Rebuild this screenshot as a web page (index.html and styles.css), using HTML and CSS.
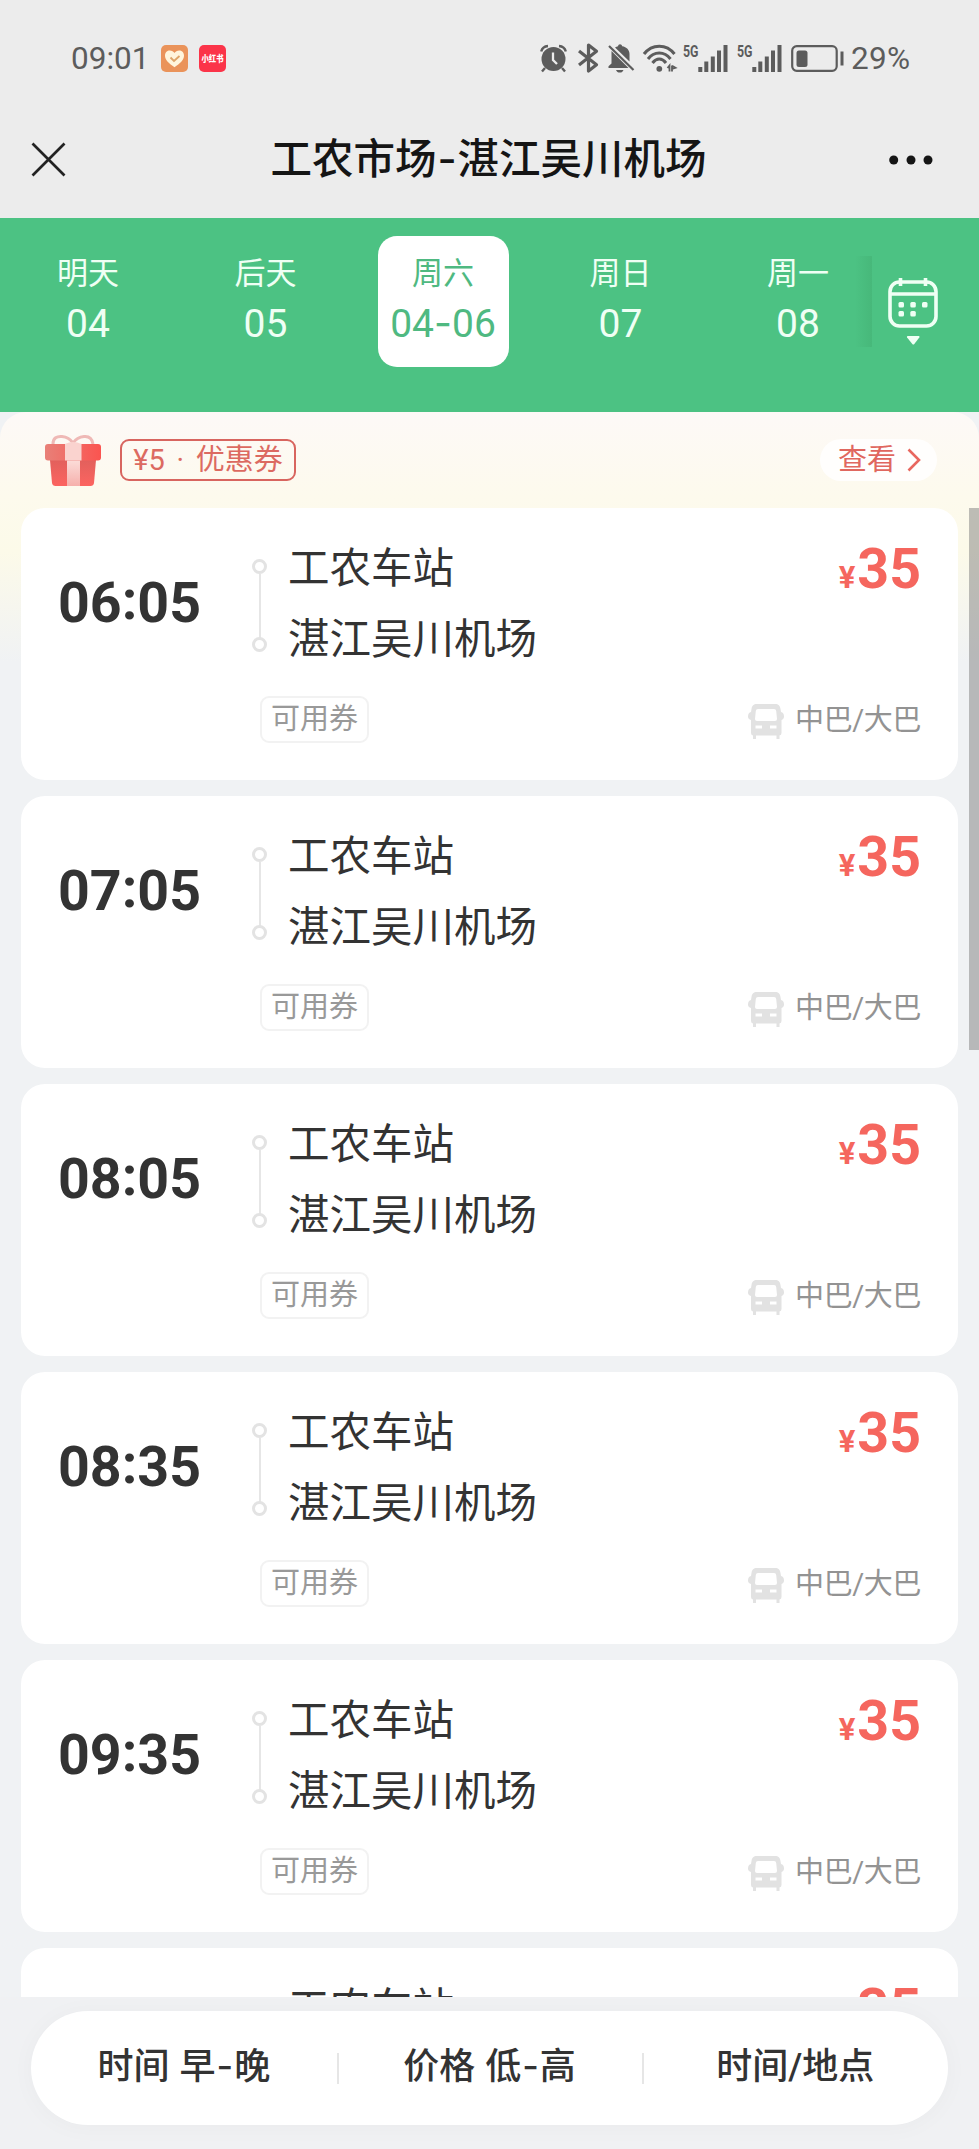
FILE: index.html
```
<!DOCTYPE html>
<html lang="zh-CN">
<head>
    <meta charset="UTF-8">
    <meta name="viewport" content="width=device-width, initial-scale=1.0">
    <title>工农市场-湛江吴川机场</title>
    <link rel="stylesheet" href="styles.css">
</head>
<body>
    <div id="app">
        <div class="status-bar">
            <span class="clock">09:01</span>
            <svg class="app-icon" width="27" height="27" viewBox="0 0 27 27">
                <rect width="27" height="27" rx="5" fill="#ea935a"/>
                <path d="M13.5 22.3C8 18.5 4 15.200 4 10.800C4 7.500 6.300 5.600 8.800 5.600C10.900 5.600 12.500 6.600 13.500 8C14.500 6.600 16.100 5.600 18.200 5.600C20.700 5.600 23 7.500 23 10.800C23 15.200 19 18.500 13.500 22.300Z" fill="#fff5dc"/>
                <path d="M9.500 12.500l3.500 3.500 5.500-5" fill="none" stroke="#dda468" stroke-width="1.800"/>
            </svg>
            <svg class="app-icon" width="27" height="27" viewBox="0 0 27 27">
                <rect width="27" height="27" rx="5" fill="#fb3449"/>
                <text x="2.500" y="16.500" textLength="22" lengthAdjust="spacingAndGlyphs" class="xhs">小红书</text>
            </svg>
            <div class="status-right">
                <svg width="27" height="29" viewBox="0 0 27 29">
                    <circle cx="13.500" cy="15" r="12" fill="#5c5c5c"/>
                    <path d="M1.200 7.500C2 4.300 4.500 2.300 8 2M25.800 7.500C25 4.300 22.500 2.300 19 2M5 24l-3 3.500M22 24l3 3.500" fill="none" stroke="#5c5c5c" stroke-width="2.400"/>
                    <path d="M13 8.500v7.500l4 4" fill="none" stroke="#ececec" stroke-width="2.300"/>
                </svg>
                <svg class="bt" width="21" height="30" viewBox="0 0 21 30">
                    <path d="M1 8l17.500 13.800-8 6.200V2l8 6.200L1 22" fill="none" stroke="#5c5c5c" stroke-width="3.200" stroke-linejoin="round"/>
                </svg>
                <svg class="bell" width="28" height="30" viewBox="0 0 28 30">
                    <path d="M8 4.500C9 3.800 10 3.500 11 3.300C11.200 2 12 1.300 13 1.300S15 2 15.200 3.300C19.500 4 22.500 7 22.500 11V18.500zM4.500 8L21.500 25H1.500V23.300L4.500 20.500z" fill="#5c5c5c"/>
                    <path d="M2 3l24.500 24" stroke="#5c5c5c" stroke-width="2.200"/>
                    <path d="M9 27h7.500c-.6 1.700-1.900 2.600-3.700 2.600s-3.200-.9-3.800-2.600z" fill="#5c5c5c"/>
                </svg>
                <svg class="wifi" width="34" height="29" viewBox="0 0 34 29">
                    <g fill="none" stroke="#5c5c5c" stroke-width="3">
                        <path d="M1 10C9 -.5 23.500 -.5 31.500 10"/>
                        <path d="M5 15C11 7 21.500 7 27.500 15"/>
                        <path d="M9.500 19C13.500 13.700 19 13.700 23 19"/>
                    </g>
                    <circle cx="16.300" cy="24.800" r="2.900" fill="#5c5c5c"/>
                    <path d="M24.500 24l2-2.500v6M29 27.500v-6M29 25l3.500-1.200-3.500-2" fill="none" stroke="#5c5c5c" stroke-width="1.800"/>
                </svg>
                <svg class="signal" width="45" height="29" viewBox="0 0 45 29">
                    <text x="0" y="13" textLength="15.500" lengthAdjust="spacingAndGlyphs">5G</text>
                    <path d="M17.300 28v-5M23.300 28V17.500M29.800 28V12.500M36 28V6.500M42.500 28V1" fill="none" stroke="#5c5c5c" stroke-width="4"/>
                </svg>
                <svg class="signal" width="45" height="29" viewBox="0 0 45 29">
                    <text x="0" y="13" textLength="15.500" lengthAdjust="spacingAndGlyphs">5G</text>
                    <path d="M17.300 28v-5M23.300 28V17.500M29.800 28V12.500M36 28V6.500M42.500 28V1" fill="none" stroke="#5c5c5c" stroke-width="4"/>
                </svg>
                <svg class="battery" width="53" height="29" viewBox="0 0 53 29">
                    <rect x="1.200" y="2.200" width="44.500" height="24.600" rx="4.500" fill="none" stroke="#5c5c5c" stroke-width="2.200"/>
                    <rect x="5.500" y="6.500" width="11" height="16.500" rx="2.500" fill="#5c5c5c"/>
                    <path d="M51 7.500v14" stroke="#5c5c5c" stroke-width="3"/>
                </svg>
                <span class="percent">29%</span>
            </div>
        </div>

        <div class="nav-bar">
            <svg width="35" height="35" viewBox="0 0 35 35">
                <path d="M1.500 1.500l32 32M33.500 1.500l-32 32" stroke="#222" stroke-width="2.700"/>
            </svg>
            <h1>工农市场<span class="dash">-</span>湛江吴川机场</h1>
            <svg class="more" width="44" height="10" viewBox="0 0 44 10">
                <circle cx="4.700" cy="5" r="4.500"/><circle cx="22" cy="5" r="4.500"/><circle cx="39" cy="5" r="4.500"/>
            </svg>
        </div>

        <div class="date-bar">
            <div class="dates">
                <div class="date"><span>明天</span><b>04</b></div>
                <div class="date"><span>后天</span><b>05</b></div>
                <div class="date active"><span>周六</span><b>04<span class="dash">-</span>06</b></div>
                <div class="date"><span>周日</span><b>07</b></div>
                <div class="date"><span>周一</span><b>08</b></div>
            </div>
            <div class="edge"></div>
            <svg class="calendar" width="50" height="70" viewBox="0 0 50 70">
                <g fill="none" stroke="#effff4" stroke-width="3.600">
                    <rect x="2" y="5" width="46" height="44" rx="9.500"/>
                    <path d="M2 17h46M12.500 1v8M37.500 1v8"/>
                </g>
                <g fill="#effff4">
                    <rect x="10.500" y="25" width="5.500" height="5.500" rx="1.500"/>
                    <rect x="22.300" y="25" width="5.500" height="5.500" rx="1.500"/>
                    <rect x="34" y="25" width="5.500" height="5.500" rx="1.500"/>
                    <rect x="10.500" y="34" width="5.500" height="5.500" rx="1.500"/>
                    <rect x="22.300" y="34" width="5.500" height="5.500" rx="1.500"/>
                    <path d="M19.500 59h11.500q1 .5.300 1.500l-5 6.500q-1 1-2 0l-5.200-6.500q-.6-1 .4-1.500z"/>
                </g>
            </svg>
        </div>

        <div class="content">
            <div class="promo">
                <svg class="gift" width="56" height="53" viewBox="0 0 56 53">
                    <defs>
                        <linearGradient id="lid"><stop offset="0" stop-color="#e88078"/><stop offset="1" stop-color="#fb5450"/></linearGradient>
                        <linearGradient id="box" x2="0" y2="1"><stop offset="0" stop-color="#e2605c"/><stop offset="1" stop-color="#fc6460"/></linearGradient>
                        <linearGradient id="band" x2="0" y2="1"><stop offset="0" stop-color="#fbdcd8"/><stop offset="1" stop-color="#f6b0ac"/></linearGradient>
                    </defs>
                    <path d="M8 10C8 4 12 2 17 2.500C22 3 26 6 28 9C30 6 34 3 39 2.500C44 2 47 4 48 10" fill="none" stroke="#efb9b6" stroke-width="3"/>
                    <path d="M5 26h46l-2 23q-.5 3-3.500 3h-35q-3 0-3.500-3z" fill="url(#box)"/>
                    <rect x="0" y="10" width="56" height="16.500" rx="3" fill="url(#lid)"/>
                    <path d="M22 26.500h13V52H22z" fill="url(#band)"/>
                    <path d="M20 10q8-4 16.500 0v16.500H20z" fill="#fad3cf"/>
                </svg>
                <div class="coupon">¥5 · 优惠券</div>
                <div class="view">
                    查看
                    <svg width="14" height="24" viewBox="0 0 14 24">
                        <path d="M1.500 1.500L12 12 1.500 22.500" fill="none" stroke="#e8675f" stroke-width="2.600"/>
                    </svg>
                </div>
            </div>
            <div id="list" class="list"></div>
            <div class="scrollbar"></div>
        </div>

        <div class="footer">
            <div class="sort-bar">
                <div class="sort">时间 早<span class="dash">-</span>晚</div>
                <div class="sort">价格 低<span class="dash">-</span>高</div>
                <div class="sort">时间/地点</div>
            </div>
        </div>
    </div>

    <script>
        const times = ['06:05', '07:05', '08:05', '08:35', '09:35', '10:05'];
        const list = document.getElementById('list');

        // One card for each departure
        times.forEach(time => {
            const [hour, minute] = time.split(':');
            list.innerHTML += `
                <div class="card">
                    <div class="time">${hour}<span class="colon">:</span>${minute}</div>
                    <div class="line"><i></i><i></i></div>
                    <div class="stations">
                        <div>工农车站</div>
                        <div>湛江吴川机场</div>
                    </div>
                    <div class="price"><small>¥</small>35</div>
                    <div class="tag">可用券</div>
                    <div class="bus">
                        <svg width="36" height="37" viewBox="0 0 36 37">
                            <path fill="#e2e2e2" fill-rule="evenodd" d="M9 1h18c3.500 0 5 1.500 5.500 5l.5 3c2 .5 3 2 3 4.500 0 2-1 3-2.500 3.500V30q0 2-2 2.500V36h-3v-3.500H8V36H5v-3.500q-2-.5-2-2.500V17C1 16.500 0 15.500 0 13.500 0 11 1 9.500 3 9l.5-3C4 2.500 5.500 1 9 1zM10 6q-2 0-2.200 2L7 16q0 2 2 2h18q2 0 2-2l-.8-8Q28 6 26 6zM7.500 22.500v3H14v-3zM22 22.500v3h6.500v-3z"/>
                        </svg>
                        <span>中巴/大巴</span>
                    </div>
                </div>
            `;
        });
    </script>
</body>
</html>
```
FILE: styles.css
```
body {
    margin: 0;
    font-family: Roboto, "Noto Sans CJK SC", sans-serif;
    background-color: #f0f2f4;
    color: #333;
}
#app {
    display: flex;
    flex-direction: column;
    height: 2149px;
    overflow: hidden;
}
svg {
    flex-shrink: 0;
    overflow: visible;
}
.dash {
    font-family: Inter, sans-serif;
    line-height: 1;
}

/* status bar */
.status-bar {
    box-sizing: border-box;
    height: 101px;
    padding: 15px 66px 0 71px;
    display: flex;
    align-items: center;
    background-color: #ececec;
    color: #5c5c5c;
    font-size: 31.5px;
}
.clock {
    width: 90px;
}
.app-icon {
    margin-right: 11px;
}
.xhs {
    font-size: 9px;
    font-weight: 900;
    fill: #fff;
}
.status-right {
    display: flex;
    align-items: center;
    margin-left: auto;
}
.bt {
    margin-left: 11px;
}
.bell {
    margin-left: 8px;
}
.wifi {
    margin-left: 8px;
}
.signal {
    margin-left: 6px;
}
.signal + .signal {
    margin-left: 9px;
}
.signal text {
    font-size: 17px;
    font-weight: 700;
    fill: #5c5c5c;
}
.battery {
    margin-left: 9px;
}
.percent {
    margin-left: 7px;
    width: 62px;
    letter-spacing: 0.3px;
}

/* title */
.nav-bar {
    box-sizing: border-box;
    height: 117px;
    padding: 0 46px 0 31px;
    display: flex;
    align-items: center;
    background-color: #ececec;
}
h1 {
    flex: 1;
    margin: 0;
    padding-left: 22px;
    font-size: 41.5px;
    font-weight: 500;
    line-height: 52px;
    text-align: center;
    color: #151515;
}
h1 .dash {
    margin: 0 1px;
}
.more {
    fill: #151515;
}

/* dates */
.date-bar {
    box-sizing: border-box;
    height: 194px;
    padding-top: 18px;
    display: flex;
    background-color: #4cc283;
    color: #effff4;
}
.dates {
    display: flex;
    width: 855px;
    overflow: hidden;
}
.date {
    box-sizing: border-box;
    width: 131px;
    height: 131px;
    margin: 0 23.250px;
    padding-top: 15px;
    flex-shrink: 0;
    border-radius: 19px;
    text-align: center;
    font-size: 31px;
}
.date:first-child {
    margin-left: 22.500px;
}
.date > span {
    display: block;
    line-height: 46px;
}
.date b {
    display: block;
    font-size: 39px;
    font-weight: 400;
    line-height: 54px;
}
.date.active {
    background-color: #fff;
    color: #4fb981;
}
.edge {
    width: 17px;
    height: 91px;
    margin-top: 20px;
    background: linear-gradient(to right, #4cc283, #47b87a);
}
.calendar {
    margin: 41px 0 0 16px;
}

/* list */
.content {
    position: relative;
    height: 1585px;
    overflow: hidden;
    border-radius: 26px 26px 0 0;
    background: linear-gradient(#fdf9f7, #fdfaed 85px, #fcfae9 140px, #f0f2f4 250px);
}
.promo {
    display: flex;
    align-items: center;
    height: 96px;
    padding: 0 42px 0 45px;
}
.coupon {
    box-sizing: border-box;
    width: 176px;
    height: 42px;
    margin-left: 19px;
    border: 2px solid #d8655f;
    border-radius: 9px;
    color: #dc6a61;
    font-size: 29px;
    line-height: 38px;
    text-align: center;
    white-space: nowrap;
    word-spacing: 4.5px;
}
.view {
    display: flex;
    align-items: center;
    gap: 11px;
    box-sizing: border-box;
    width: 117px;
    height: 42px;
    padding-left: 18px;
    margin-left: auto;
    border-radius: 21px;
    background-color: #fffefd;
    color: #e0675f;
    font-size: 29px;
    line-height: 40px;
}
.list {
    display: flex;
    flex-direction: column;
    gap: 16px;
    padding: 0 21px;
}
.card {
    box-sizing: border-box;
    height: 272px;
    flex-shrink: 0;
    padding: 25px 37px 0;
    display: grid;
    grid-template-columns: 194px 36px 1fr auto;
    grid-template-rows: 142px 1fr;
    border-radius: 24px;
    background-color: #fff;
}
.time {
    font-size: 55.5px;
    font-weight: 700;
    line-height: 142px;
}
.colon {
    vertical-align: 3px;
    line-height: 1;
}
.line {
    display: flex;
    flex-direction: column;
    align-items: center;
    justify-content: space-between;
    width: 15px;
    height: 93px;
    margin-top: 26px;
    background: linear-gradient(#e6e6e6, #e6e6e6) center / 2px 64px no-repeat;
}
.line i {
    box-sizing: border-box;
    width: 15px;
    height: 15px;
    border: 3px solid #e3e3e3;
    border-radius: 50%;
}
.stations {
    font-size: 41.5px;
    line-height: 71px;
}
.price {
    color: #f5665e;
    font-size: 55.5px;
    font-weight: 700;
    line-height: 73px;
    text-align: right;
}
.price small {
    margin-right: 2px;
    font-size: 31px;
    line-height: 1;
}
.tag {
    grid-column: 2 / 4;
    box-sizing: border-box;
    width: 109px;
    height: 47px;
    margin: 21px 0 0 8px;
    border: 2px solid #f2f2f2;
    border-radius: 9px;
    color: #999;
    font-size: 29px;
    line-height: 42px;
    text-align: center;
}
.bus {
    display: flex;
    align-items: center;
    justify-content: flex-end;
    gap: 11px;
    height: 37px;
    margin-top: 28px;
    color: #939393;
    font-size: 29px;
    letter-spacing: -0.4px;
    white-space: nowrap;
}
.bus span {
    margin-bottom: 10px;
}
.scrollbar {
    position: absolute;
    top: 96px;
    right: 0;
    width: 10px;
    height: 542px;
    background-color: rgba(125, 125, 125, 0.500);
}

/* sorting */
.footer {
    flex: 1;
    padding: 14px 31px 0;
    background-color: #f0f1f3;
}
.sort-bar {
    display: flex;
    height: 114px;
    border-radius: 57px;
    background-color: #fff;
    box-shadow: 0 2px 24px rgba(0, 0, 0, 0.030);
}
.sort {
    flex: 1;
    font-size: 36px;
    font-weight: 500;
    line-height: 112px;
    text-align: center;
    white-space: nowrap;
    word-spacing: 1px;
}
.sort .dash {
    margin: 0 1px;
}
.sort + .sort {
    background: linear-gradient(#e6e6e6, #e6e6e6) left center / 2px 31px no-repeat;
}
```
